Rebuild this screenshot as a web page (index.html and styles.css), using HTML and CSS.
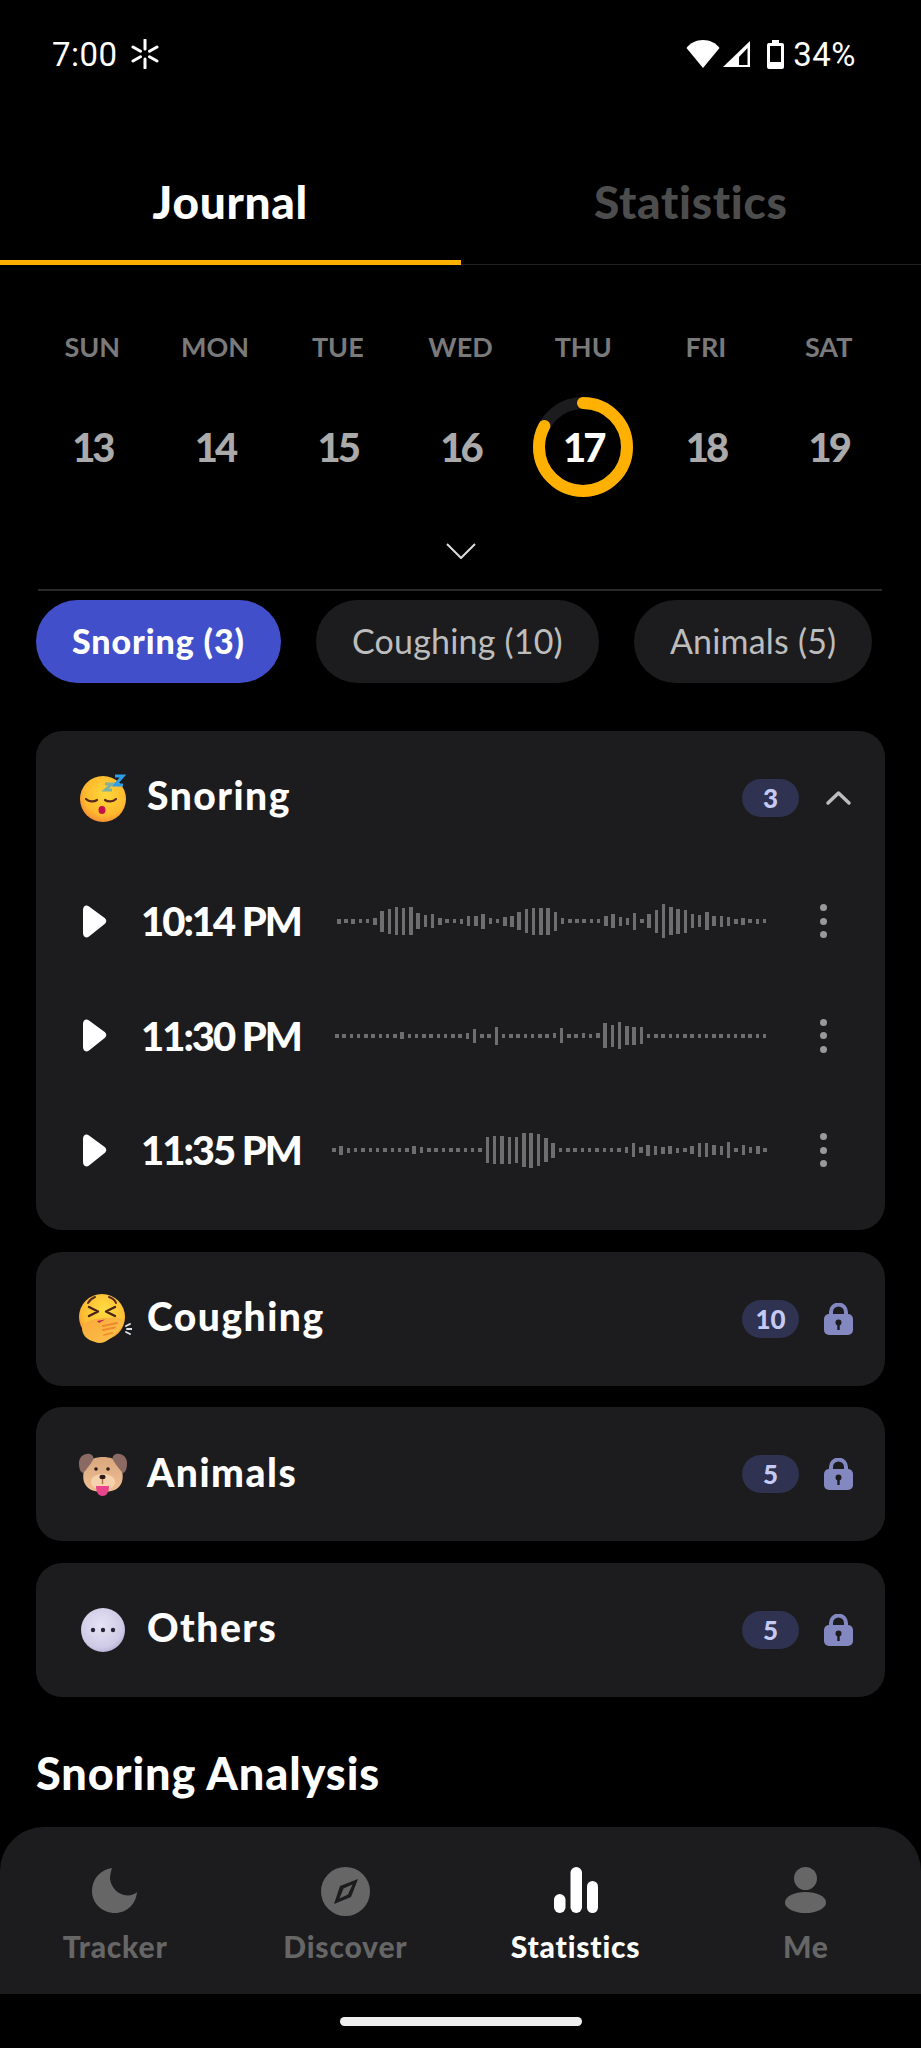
FILE: index.html
```html
<!DOCTYPE html>
<html lang="en">
<head>
    <meta charset="UTF-8">
    <meta name="viewport" content="width=device-width, initial-scale=1.0">
    <title>Journal</title>
    <link rel="stylesheet" href="styles.css">
</head>
<body>
    <div class="status-bar">
        <div class="status-left">
            <span>7:00</span>
            <svg class="spark" viewBox="0 0 30 30" width="30" height="30">
                <path d="M15 1v9M15 20v9M3 8l7.500 4.300M27 8l-7.500 4.300M3 22l7.500-4.300M27 22l-7.500-4.300" stroke="#fff" stroke-width="3" stroke-linecap="round" fill="none"/>
            </svg>
        </div>
        <div class="status-right">
            <svg viewBox="0 0 34 28" width="34" height="28"><path d="M17 28L0.500 8C4 3 10 0 17 0s13 3 16.500 8z" fill="#fff"/></svg>
            <svg viewBox="0 0 27 26" width="27" height="26"><path d="M27 0v26H0z" fill="#fff"/><path d="M24.500 7L16 16v8h8.500z" fill="#000"/></svg>
            <svg class="battery" viewBox="0 0 17 29" width="17" height="29"><path d="M5 0h7v3h3a2 2 0 0 1 2 2v22a2 2 0 0 1-2 2H2a2 2 0 0 1-2-2V5a2 2 0 0 1 2-2h3z" fill="#fff"/><rect x="3" y="6" width="11" height="16" fill="#000"/></svg>
            <span>34%</span>
        </div>
    </div>

    <div class="tabs">
        <div class="tab active">Journal</div>
        <div class="tab">Statistics</div>
    </div>

    <div class="week">
        <div class="day-name">SUN</div>
        <div class="day-name">MON</div>
        <div class="day-name">TUE</div>
        <div class="day-name">WED</div>
        <div class="day-name">THU</div>
        <div class="day-name">FRI</div>
        <div class="day-name">SAT</div>
        <div class="day-num">13</div>
        <div class="day-num">14</div>
        <div class="day-num">15</div>
        <div class="day-num">16</div>
        <div class="day-num today">
            <svg class="ring" viewBox="0 0 100 100" width="100" height="100">
                <circle cx="50" cy="50" r="44" fill="none" stroke="#1c1c1e" stroke-width="12"/>
                <circle cx="50" cy="50" r="44" fill="none" stroke="#ffb000" stroke-width="12" stroke-linecap="round" stroke-dasharray="229 277" transform="rotate(-90 50 50)"/>
            </svg>
            <span>17</span>
        </div>
        <div class="day-num">18</div>
        <div class="day-num">19</div>
    </div>

    <div class="expand">
        <svg viewBox="0 0 30 16" width="30" height="16"><path d="M1 1l14 14L29 1" fill="none" stroke="#ddd" stroke-width="2"/></svg>
    </div>
    <div class="divider"></div>

    <div class="chips">
        <div class="chip active">Snoring (3)</div>
        <div class="chip">Coughing (10)</div>
        <div class="chip">Animals (5)</div>
    </div>

    <div class="cards">
        <div class="card">
            <div class="card-head">
                <svg class="emoji" viewBox="0 0 48 48" width="48" height="48">
                    <defs>
                        <radialGradient id="faceA" cx="0.55" cy="0.4" r="0.7">
                            <stop offset="0" stop-color="#ffd83a"/>
                            <stop offset="0.65" stop-color="#ffb92e"/>
                            <stop offset="1" stop-color="#f5793a"/>
                        </radialGradient>
                    </defs>
                    <circle cx="24" cy="25" r="23" fill="url(#faceA)"/>
                    <path d="M7 25c3 3 8 3 11 1M26 26c3 2 8 2 11-1" fill="none" stroke="#5a2a1e" stroke-width="2.200" stroke-linecap="round"/>
                    <ellipse cx="23" cy="36" rx="3.500" ry="4" fill="#c4104e"/>
                    <path d="M26 10h7l-7 6h7" fill="none" stroke="#7fb0a0" stroke-width="2.800"/>
                    <path d="M36 2h8l-8 9h8" fill="none" stroke="#2d9ee8" stroke-width="3"/>
                </svg>
                <span class="card-title">Snoring</span>
                <span class="badge">3</span>
                <svg class="card-icon" viewBox="0 0 29 16" width="29" height="16"><path d="M4 13L14.500 3 25 13" fill="none" stroke="#bdbdbd" stroke-width="3.500" stroke-linecap="round" stroke-linejoin="round"/></svg>
            </div>
            <div class="record">
                <svg class="play" viewBox="0 0 25 33" width="25" height="33"><path d="M1 5c0-4 3-5.500 6-3.500l15 11c3 2 3 5 0 7L7 31.500C4 33.500 1 32 1 28z" fill="#fff"/></svg>
                <span class="time">10:14 PM</span>
                <div class="wave wave-a" data-wave="a"></div>
                <div class="dots"><i></i><i></i><i></i></div>
            </div>
            <div class="record">
                <svg class="play" viewBox="0 0 25 33" width="25" height="33"><path d="M1 5c0-4 3-5.500 6-3.500l15 11c3 2 3 5 0 7L7 31.500C4 33.500 1 32 1 28z" fill="#fff"/></svg>
                <span class="time">11:30 PM</span>
                <div class="wave wave-b" data-wave="b"></div>
                <div class="dots"><i></i><i></i><i></i></div>
            </div>
            <div class="record">
                <svg class="play" viewBox="0 0 25 33" width="25" height="33"><path d="M1 5c0-4 3-5.500 6-3.500l15 11c3 2 3 5 0 7L7 31.500C4 33.500 1 32 1 28z" fill="#fff"/></svg>
                <span class="time">11:35 PM</span>
                <div class="wave wave-c" data-wave="c"></div>
                <div class="dots"><i></i><i></i><i></i></div>
            </div>
        </div>

        <div class="card">
            <div class="card-head">
                <svg class="emoji wide" viewBox="0 0 53 50" width="53" height="50">
                    <defs>
                        <radialGradient id="faceB" cx="0.55" cy="0.35" r="0.7">
                            <stop offset="0" stop-color="#ffdc42"/>
                            <stop offset="0.7" stop-color="#fdbb33"/>
                            <stop offset="1" stop-color="#f28a33"/>
                        </radialGradient>
                        <linearGradient id="handB" x1="0" y1="0" x2="1" y2="1">
                            <stop offset="0" stop-color="#f9a93a"/>
                            <stop offset="1" stop-color="#fdc24a"/>
                        </linearGradient>
                    </defs>
                    <circle cx="23" cy="23" r="23" fill="url(#faceB)"/>
                    <path d="M9 9c2-3 4-5 7-6M30 3c3 1 6 3 7 6" fill="none" stroke="#5a2a1e" stroke-width="2" stroke-linecap="round"/>
                    <path d="M10 13l9 4.500-9 4.500M36 13l-9 4.500 9 4.500" fill="none" stroke="#4a2418" stroke-width="2.500" stroke-linecap="round" stroke-linejoin="round"/>
                    <path d="M3 34c2-5 8-8 14-9 8-1 20-2 25 0 3 2 2 6-1 9-3 4-7 9-12 12-4 3-9 4-13 2C8 46 3 41 3 34z" fill="url(#handB)"/>
                    <path d="M18 27l8-1.500-6 3.500z" fill="#c0264e"/>
                    <path d="M24 32l14-3M24 36l12-2.500M25 41l8-2" fill="none" stroke="#f0892d" stroke-width="1.800" stroke-linecap="round"/>
                    <path d="M47 32l4-2M48 35h5M47 38l4 2" fill="none" stroke="#dfe6ea" stroke-width="1.800" stroke-linecap="round"/>
                </svg>
                <span class="card-title">Coughing</span>
                <span class="badge">10</span>
                <svg class="card-icon" viewBox="0 0 29 32" width="29" height="32"><path d="M7 14V9a7.500 7.500 0 0 1 15 0v5" fill="none" stroke="#8488c0" stroke-width="4"/><rect x="0" y="11" width="29" height="21" rx="5" fill="#8488c0"/><circle cx="14.500" cy="19.500" r="3" fill="#1c1c1e"/><rect x="13.300" y="20" width="2.400" height="7" fill="#1c1c1e"/></svg>
            </div>
        </div>

        <div class="card">
            <div class="card-head">
                <svg class="emoji" viewBox="0 -3 48 48" width="48" height="48">
                    <defs>
                        <linearGradient id="furC" x1="0" y1="0" x2="0" y2="1">
                            <stop offset="0" stop-color="#d9a67e"/>
                            <stop offset="1" stop-color="#f0c094"/>
                        </linearGradient>
                    </defs>
                    <path d="M8 10c6-8 26-8 32 0 4 6 5 16 2 21-3 6-10 8-18 8s-15-2-18-8c-3-5-2-15 2-21z" fill="url(#furC)"/>
                    <path d="M11 1C5 0 0 4 0 10c0 5 1 9 4 10 3-3 7-8 10-13 1-3 0-5-3-6z" fill="#8a6a63"/>
                    <path d="M37 1c6-1 11 3 11 9 0 5-1 9-4 10-3-3-7-8-10-13-1-3 0-5 3-6z" fill="#8a6a63"/>
                    <ellipse cx="24" cy="29" rx="12" ry="8" fill="#f6d2ac"/>
                    <circle cx="17" cy="16" r="1.800" fill="#2c1a16"/>
                    <circle cx="29" cy="16" r="1.800" fill="#2c1a16"/>
                    <ellipse cx="23.500" cy="24" rx="3" ry="2.200" fill="#2c1a16"/>
                    <path d="M23.500 26v5" stroke="#a86f4e" stroke-width="1.400"/>
                    <path d="M17 33h13c0 7-3 10-6.500 10S17 40 17 33z" fill="#e8458c"/>
                </svg>
                <span class="card-title">Animals</span>
                <span class="badge">5</span>
                <svg class="card-icon" viewBox="0 0 29 32" width="29" height="32"><path d="M7 14V9a7.500 7.500 0 0 1 15 0v5" fill="none" stroke="#8488c0" stroke-width="4"/><rect x="0" y="11" width="29" height="21" rx="5" fill="#8488c0"/><circle cx="14.500" cy="19.500" r="3" fill="#1c1c1e"/><rect x="13.300" y="20" width="2.400" height="7" fill="#1c1c1e"/></svg>
            </div>
        </div>

        <div class="card">
            <div class="card-head">
                <svg class="emoji" viewBox="0 0 48 48" width="48" height="48">
                    <defs>
                        <radialGradient id="faceD" cx="0.45" cy="0.4" r="0.7">
                            <stop offset="0" stop-color="#e6e3f5"/>
                            <stop offset="0.7" stop-color="#cfcbe6"/>
                            <stop offset="1" stop-color="#a9a3cc"/>
                        </radialGradient>
                    </defs>
                    <circle cx="24" cy="24" r="22" fill="url(#faceD)"/>
                    <circle cx="14" cy="24" r="2.200" fill="#2a2438"/>
                    <circle cx="24" cy="24" r="2.200" fill="#2a2438"/>
                    <circle cx="34" cy="24" r="2.200" fill="#2a2438"/>
                </svg>
                <span class="card-title">Others</span>
                <span class="badge">5</span>
                <svg class="card-icon" viewBox="0 0 29 32" width="29" height="32"><path d="M7 14V9a7.500 7.500 0 0 1 15 0v5" fill="none" stroke="#8488c0" stroke-width="4"/><rect x="0" y="11" width="29" height="21" rx="5" fill="#8488c0"/><circle cx="14.500" cy="19.500" r="3" fill="#1c1c1e"/><rect x="13.300" y="20" width="2.400" height="7" fill="#1c1c1e"/></svg>
            </div>
        </div>
    </div>

    <h2 class="section-title">Snoring Analysis</h2>

    <nav class="bottom-nav">
        <div class="nav-item">
            <svg viewBox="0 0 46 46" width="46" height="46"><path d="M20 1C8 3 0 12 0 24c0 12 10 22 23 22 12 0 21-9 22-21-3 3-8 4-13 3-8-2-13-9-14-16 0-4 1-8 2-11z" fill="#666"/></svg>
            <span>Tracker</span>
        </div>
        <div class="nav-item">
            <svg viewBox="0 0 49 49" width="49" height="49"><circle cx="24.500" cy="24.500" r="24.500" fill="#666"/><path d="M37 12L30 30 13 37l6-18z" fill="#1c1c1e"/><path d="M31.500 17.500L27 27.500 18.500 31.500 22.500 21.500z" fill="#666"/></svg>
            <span>Discover</span>
        </div>
        <div class="nav-item current">
            <svg viewBox="0 0 44 46" width="44" height="46"><rect x="0" y="27" width="11.500" height="19" rx="5.750" fill="#fff"/><rect x="16.500" y="0" width="11.500" height="46" rx="5.750" fill="#fff"/><rect x="33" y="14" width="11" height="32" rx="5.500" fill="#fff"/></svg>
            <span>Statistics</span>
        </div>
        <div class="nav-item">
            <svg viewBox="0 0 41 46" width="41" height="46"><ellipse cx="20.500" cy="11.500" rx="11.500" ry="11.500" fill="#666"/><ellipse cx="20.500" cy="35.500" rx="20.500" ry="10.500" fill="#666"/></svg>
            <span>Me</span>
        </div>
    </nav>

    <div class="home-bar"></div>

    <script src="wave.js"></script>
</body>
</html>
```

FILE: styles.css
```css
body {
    font-family: "Lato", "Noto Sans", sans-serif;
    width: 921px;
    height: 2048px;
    margin: 0;
    overflow: hidden;
    background-color: #000;
    color: #fff;
}
svg {
    display: block;
    flex-shrink: 0;
}

/* status bar */
.status-bar {
    display: flex;
    justify-content: space-between;
    align-items: center;
    height: 108px;
    padding: 0 65px 0 52px;
    font-family: "Roboto", sans-serif;
    font-size: 33px;
    letter-spacing: 0.5px;
}
.status-left, .status-right {
    display: flex;
    align-items: center;
}
.spark {
    margin-left: 12px;
}
.status-right svg {
    margin-right: 3px;
}
.status-right .battery {
    margin: 0 9px 0 14px;
}

/* tabs */
.tabs {
    display: flex;
    margin-top: 34px;
    border-bottom: 1px solid #222;
}
.tab {
    width: 50%;
    height: 118px;
    border-bottom: 5px solid transparent;
    margin-bottom: -1px;
    text-align: center;
    line-height: 120px;
    font-size: 46px;
    font-weight: 900;
    letter-spacing: 0.7px;
    color: #4d4d4d;
}
.tab.active {
    color: #fff;
    border-bottom-color: #ffb000;
}

/* week */
.week {
    display: grid;
    grid-template-columns: repeat(7, 1fr);
    grid-template-rows: 34px 100px;
    row-gap: 33px;
    padding: 65px 31px 0;
}
.day-name {
    text-align: center;
    line-height: 34px;
    font-size: 27px;
    font-weight: 700;
    color: #7a7a7a;
}
.day-num {
    position: relative;
    display: flex;
    align-items: center;
    justify-content: center;
    font-size: 40px;
    font-weight: 900;
    letter-spacing: -3px;
    color: #aaa;
}
.today {
    color: #fff;
}
.today span {
    position: relative;
}
.ring {
    position: absolute;
    left: 50%;
    top: 0;
    margin-left: -50px;
}
.expand {
    display: flex;
    justify-content: center;
    margin-top: 46px;
}
.divider {
    height: 2px;
    margin: 30px 39px 0 38px;
    background-color: #2a2a2a;
}

/* chips */
.chips {
    display: flex;
    gap: 35px;
    margin-top: 9px;
    padding-left: 36px;
}
.chip {
    display: flex;
    align-items: center;
    height: 81px;
    padding: 0 36px 2px;
    border-radius: 42px;
    background-color: #1c1c1e;
    font-size: 34px;
    letter-spacing: 0.2px;
    color: #bdbdbd;
}
.chip.active {
    background-color: #414fcb;
    color: #fff;
    font-weight: 900;
    letter-spacing: 0.9px;
}

/* cards */
.cards {
    display: flex;
    flex-direction: column;
    gap: 21.500px;
    margin: 48px 36px 0;
}
.card {
    background-color: #1c1c1e;
    border-radius: 26px;
}
.card > .card-head:last-child {
    height: 134px;
}
.card:first-child {
    padding-bottom: 22.500px;
}
.card-head {
    display: flex;
    align-items: center;
    height: 133px;
    padding: 0 32px 0 43px;
}
.emoji {
    margin-right: 20px;
}
.emoji.wide {
    margin-right: 15px;
}
.card-title {
    flex: 1;
    padding-bottom: 5px;
    font-size: 39px;
    font-weight: 900;
    letter-spacing: 1.5px;
}
.badge {
    width: 57px;
    height: 38px;
    margin-right: 25px;
    border-radius: 19px;
    background-color: #2f3250;
    text-align: center;
    line-height: 38px;
    font-size: 26px;
    font-weight: 900;
    color: #c5caf5;
}
.record {
    display: flex;
    align-items: center;
    height: 114.500px;
    padding: 0 58px 0 46px;
}
.play {
    margin-right: 34px;
}
.time {
    flex: 1;
    font-size: 40px;
    font-weight: 900;
    letter-spacing: -2px;
}
.wave {
    display: flex;
    align-items: center;
    justify-content: space-between;
    height: 40px;
}
.wave-a { width: 430px; }
.wave-b { width: 432px; }
.wave-c { width: 435px; }
.wave span {
    width: 3.500px;
    background-color: #6e6e6e;
}
.dots {
    display: flex;
    flex-direction: column;
    gap: 6.500px;
    margin-left: 53px;
}
.dots i {
    width: 7px;
    height: 7px;
    border-radius: 50%;
    background-color: #999;
}

.section-title {
    margin: 46px 36px 24px;
    line-height: 60px;
    font-size: 45px;
    font-weight: 900;
    letter-spacing: 0.9px;
}

/* bottom nav */
.bottom-nav {
    display: grid;
    grid-template-columns: repeat(4, 1fr);
    height: 167px;
    border-radius: 44px 44px 0 0;
    background-color: #1c1c1e;
}
.nav-item {
    display: flex;
    flex-direction: column;
    align-items: center;
    justify-content: space-between;
    height: 96px;
    padding-top: 40px;
    font-size: 30px;
    font-weight: 900;
    letter-spacing: 0.8px;
    line-height: 34px;
    color: #666;
}
.nav-item.current {
    color: #fff;
}
.home-bar {
    width: 242px;
    height: 9px;
    margin: 23px auto 0;
    border-radius: 5px;
    background-color: #eee;
}
```

FILE: wave.js
```js
// bar heights in px, one list per recording
var waves = {
    a: [5,4,5,4,4,7,21,25,28,27,28,16,12,14,7,4,4,5,10,10,15,6,4,9,11,18,24,27,27,27,19,6,4,4,4,4,4,10,14,9,7,17,4,14,23,34,28,25,23,14,12,18,10,11,9,5,7,4,5,4],
    b: [4,4,4,4,4,4,4,4,4,7,4,4,4,4,4,4,4,4,6,14,4,4,18,4,4,4,4,4,4,4,5,15,4,4,5,4,5,25,22,27,19,18,17,4,4,4,4,4,4,4,4,4,4,4,4,4,4,4,4,4],
    c: [4,9,5,4,4,4,4,4,4,4,4,8,6,4,4,4,4,4,4,4,4,26,28,28,27,26,34,35,32,24,15,4,4,4,4,4,4,4,4,4,6,14,6,11,9,7,8,5,4,8,14,14,10,9,16,4,10,6,8,4]
};

document.querySelectorAll('.wave').forEach(function(el) {
    waves[el.dataset.wave].forEach(function(h) {
        var bar = document.createElement('span');
        bar.style.height = h + 'px';
        el.appendChild(bar);
    });
});
```
